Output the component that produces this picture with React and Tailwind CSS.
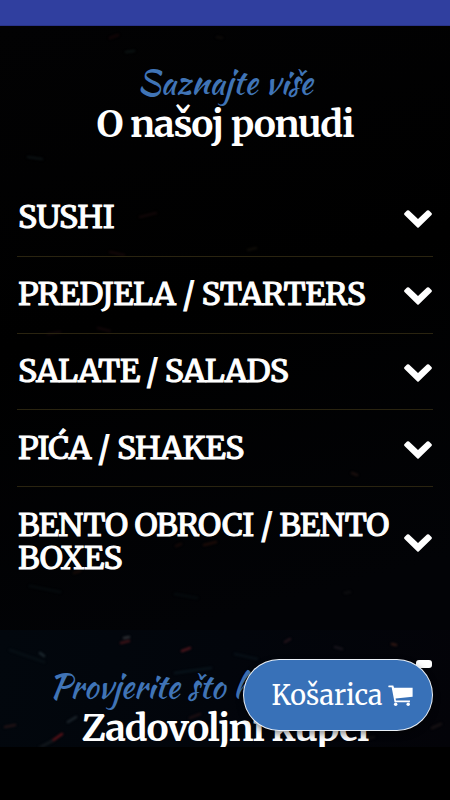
import React from 'react';

const MENU_GROUPS = [
  { id: 1, title: 'SUSHI', tracking: 'tracking-[-0.45px]' },
  { id: 2, title: 'PREDJELA / STARTERS', tracking: 'tracking-[-0.45px]' },
  { id: 3, title: 'SALATE / SALADS', tracking: 'tracking-[-0.7px]' },
  { id: 4, title: 'PIĆA / SHAKES', tracking: 'tracking-[-0.5px]' },
  { id: 5, title: 'BENTO OBROCI / BENTO BOXES', tracking: 'tracking-[-0.6px]' },
];

// x, y, length, rise, colour
const SPECKS = [
  [121, 13, 8, -2, '#3c1217'],
  [182, 21, 8, -3, '#4a141b'],
  [124, 8, 5, -1, '#2c2e33'],
  [10, 20, 34, 12, '#070f15'],
  [40, 23, 4, 3, '#1c282e'],
  [175, 43, 36, -5, '#08131a'],
  [52, 111, 10, -7, '#5a1218'],
  [35, 120, 17, -9, '#12171c'],
  [68, 92, 8, -5, '#1c242b'],
  [5, 97, 10, -2, '#221315'],
  [190, 88, 10, -4, '#1c0f12'],
  [235, 24, 22, 5, '#070f16'],
  [285, 12, 5, -3, '#22131a'],
  [335, 17, 7, 2, '#16131a'],
  [392, 14, 4, 1, '#301713'],
  [432, 98, 9, -4, '#161113'],
  [360, 110, 14, -3, '#110f11'],
];

const FAINT_SPECKS = [
  [110, 12, 8, -3, '#120506'],
  [126, 26, 8, -1, '#0a1111'],
  [217, 11, 5, 1, '#0d0a08'],
  [28, 131, 14, 2, '#0a1012'],
  [140, 191, 16, -4, '#100607'],
  [110, 226, 14, 3, '#120607'],
  [48, 308, 12, -2, '#100608'],
  [98, 302, 12, 3, '#100608'],
  [248, 224, 8, -2, '#0e0b07'],
  [352, 447, 5, 2, '#1a0f0d'],
  [204, 519, 12, -3, '#1c0b08'],
  [176, 520, 5, -2, '#150908'],
  [74, 547, 6, -2, '#140a07'],
  [30, 560, 30, 6, '#050a0d'],
  [175, 568, 22, 4, '#050a0d'],
  [345, 567, 5, -1, '#0d0d0f'],
];

const Specks = ({ items, viewBox }) => (
  <svg viewBox={viewBox} preserveAspectRatio="none" className="absolute inset-0 h-full w-full blur-[1px]" aria-hidden="true">
    {items.map(([x, y, length, rise, color]) => (
      <path key={`${x}-${y}`} d={`M${x} ${y}l${length} ${rise}`} stroke={color} strokeWidth="2.6" strokeLinecap="round" />
    ))}
  </svg>
);

const SectionHeading = ({ eyebrow, title }) => (
  <div className="relative flex flex-col items-center whitespace-nowrap">
    <p className="[font-family:'Kaushan_Script'] text-[33px] leading-[37px] text-[#4074b6]">{eyebrow}</p>
    <h2 className="mt-px font-['Merriweather',serif] text-[37px] leading-[45px] font-bold tracking-[-1.2px] text-white">{title}</h2>
  </div>
);

const ChevronDown = () => (
  <svg viewBox="0 0 28 18" className="mt-[3px] h-[18px] w-7 shrink-0 fill-white" aria-hidden="true">
    <path d="M3 .6Q4 -.3 5 .6L14 9L23 .6Q24 -.3 25 .6L27.5 3Q28.3 4 27.5 5L14.7 17.5Q14 18 13.3 17.5L.5 5Q-.3 4 .5 3Z" />
  </svg>
);

const App = () => (
  <div className="relative flex h-[800px] w-[450px] flex-col overflow-hidden bg-black">
    <div className="h-[26px] shrink-0 border-b border-[#29338a] bg-[#303f9f]" />

    <section className="relative h-[604px] shrink-0 bg-[linear-gradient(165deg,#020203,#000_45%,#020306_90%)]">
      <Specks items={FAINT_SPECKS} viewBox="0 0 450 604" />
      <div className="relative pt-[38px]">
        <SectionHeading eyebrow="Saznajte više" title="O našoj ponudi" />
      </div>
      <ul className="relative mt-[33px] px-[17px]">
        {MENU_GROUPS.map((group) => (
          <li key={group.id} className="border-b border-[#2a2410] last:border-b-0">
            <button className="flex w-full items-center justify-between py-[21.4px] pr-[1px] text-left">
              <span className={`w-[382px] pl-px font-['Merriweather',serif] text-[32px] leading-[33px] text-white [-webkit-text-stroke:1px_white] ${group.tracking}`}>
                {group.title}
              </span>
              <ChevronDown />
            </button>
          </li>
        ))}
      </ul>
    </section>

    <section className="relative h-[117px] shrink-0 overflow-hidden bg-[linear-gradient(100deg,#02070d,#02050b_50%,#030308)]">
      <Specks items={SPECKS} viewBox="0 0 450 117" />
      <div className="relative pt-[38px]">
        <SectionHeading eyebrow="Provjerite što kažu o nama" title="Zadovoljni kupci" />
      </div>
    </section>

    {/* Floating controls */}
    <div className="absolute left-[416px] top-[660px] h-[8px] w-[16px] rounded-[3px] bg-white" />
    <button className="absolute left-[243px] top-[659px] flex h-[72px] w-[190px] items-center justify-center gap-[6px] rounded-full border border-white/90 bg-[#3871b8] pl-[9px] text-white shadow-[0_3px_7px_rgba(0,0,0,0.45)]">
      <span className="font-['Merriweather',serif] text-[27px] tracking-[-0.1px]">Košarica</span>
      <svg viewBox="0 0 26 22" className="mt-[2px] h-[22px] w-[25px] fill-white" aria-hidden="true">
        <path d="M.8 .2H5.5L6.3 2.4H25.6V11.7L7.9 13.6L8.3 15.8H22.8V17.5H6.8L3.8 2H.8Q-.2 1 .8 .2Z" />
        <circle cx="8" cy="19.5" r="1.8" />
        <circle cx="21" cy="19.5" r="1.8" />
      </svg>
    </button>
  </div>
);

export default App;
